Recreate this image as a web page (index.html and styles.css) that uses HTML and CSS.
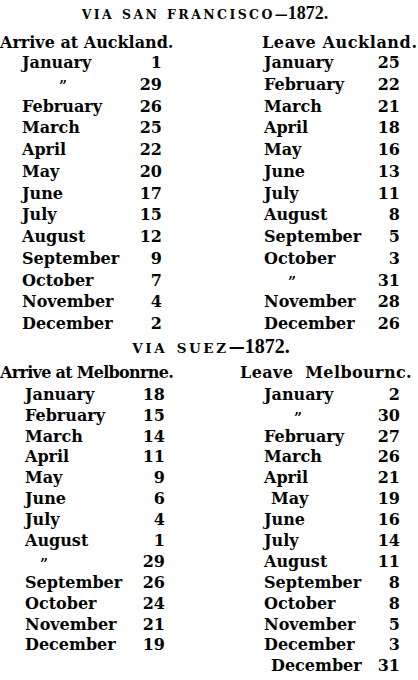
FILE: index.html
```html
<!DOCTYPE html>
<html lang="en">
<head>
<meta charset="utf-8">
<title>Mail Time Table 1872</title>
<link rel="stylesheet" href="styles.css">
</head>
<body>
<div class="page">
  <section class="sec sec-sf">
    <h1 class="title"><span class="caps">VIA SAN FRANCISCO</span><span class="dash">—</span><span class="year">1872.</span></h1>
    <div class="cols">
      <div class="col col-left">
        <h2 class="head">Arrive at Auckland.</h2>
        <ul class="rows">
          <li class="row"><span class="m">January</span><span class="d">1</span></li>
          <li class="row"><span class="m ditto ditto-a">”</span><span class="d">29</span></li>
          <li class="row"><span class="m">February</span><span class="d">26</span></li>
          <li class="row"><span class="m">March</span><span class="d">25</span></li>
          <li class="row"><span class="m">April</span><span class="d">22</span></li>
          <li class="row"><span class="m">May</span><span class="d">20</span></li>
          <li class="row"><span class="m">June</span><span class="d">17</span></li>
          <li class="row"><span class="m">July</span><span class="d">15</span></li>
          <li class="row"><span class="m">August</span><span class="d">12</span></li>
          <li class="row"><span class="m">September</span><span class="d">9</span></li>
          <li class="row"><span class="m">October</span><span class="d">7</span></li>
          <li class="row"><span class="m">November</span><span class="d">4</span></li>
          <li class="row"><span class="m">December</span><span class="d">2</span></li>
        </ul>
      </div>
      <div class="col col-right">
        <h2 class="head head-auck">Leave Auckland.</h2>
        <ul class="rows">
          <li class="row"><span class="m">January</span><span class="d">25</span></li>
          <li class="row"><span class="m">February</span><span class="d">22</span></li>
          <li class="row"><span class="m">March</span><span class="d">21</span></li>
          <li class="row"><span class="m">April</span><span class="d">18</span></li>
          <li class="row"><span class="m">May</span><span class="d">16</span></li>
          <li class="row"><span class="m">June</span><span class="d">13</span></li>
          <li class="row"><span class="m">July</span><span class="d">11</span></li>
          <li class="row"><span class="m">August</span><span class="d">8</span></li>
          <li class="row"><span class="m">September</span><span class="d">5</span></li>
          <li class="row"><span class="m">October</span><span class="d">3</span></li>
          <li class="row"><span class="m ditto ditto-b">”</span><span class="d">31</span></li>
          <li class="row"><span class="m">November</span><span class="d">28</span></li>
          <li class="row"><span class="m">December</span><span class="d">26</span></li>
        </ul>
      </div>
    </div>
  </section>
  <section class="sec sec-suez">
    <h1 class="title"><span class="caps">VIA SUEZ</span><span class="dash">—</span><span class="year">1872.</span></h1>
    <div class="cols">
      <div class="col col-left">
        <h2 class="head head-melb-arr">Arrive at Melbonrne.</h2>
        <ul class="rows rows-suez-left">
          <li class="row"><span class="m">January</span><span class="d">18</span></li>
          <li class="row"><span class="m">February</span><span class="d">15</span></li>
          <li class="row"><span class="m">March</span><span class="d">14</span></li>
          <li class="row"><span class="m">April</span><span class="d">11</span></li>
          <li class="row"><span class="m">May</span><span class="d">9</span></li>
          <li class="row"><span class="m">June</span><span class="d">6</span></li>
          <li class="row"><span class="m">July</span><span class="d">4</span></li>
          <li class="row"><span class="m">August</span><span class="d">1</span></li>
          <li class="row"><span class="m ditto ditto-c">”</span><span class="d">29</span></li>
          <li class="row"><span class="m">September</span><span class="d">26</span></li>
          <li class="row"><span class="m">October</span><span class="d">24</span></li>
          <li class="row"><span class="m">November</span><span class="d">21</span></li>
          <li class="row"><span class="m">December</span><span class="d">19</span></li>
        </ul>
      </div>
      <div class="col col-right">
        <h2 class="head head-melb">Leave Melbournc.</h2>
        <ul class="rows">
          <li class="row"><span class="m">January</span><span class="d">2</span></li>
          <li class="row"><span class="m ditto ditto-d">”</span><span class="d">30</span></li>
          <li class="row"><span class="m">February</span><span class="d">27</span></li>
          <li class="row"><span class="m">March</span><span class="d">26</span></li>
          <li class="row"><span class="m">April</span><span class="d">21</span></li>
          <li class="row"><span class="m indent">May</span><span class="d">19</span></li>
          <li class="row"><span class="m">June</span><span class="d">16</span></li>
          <li class="row"><span class="m">July</span><span class="d">14</span></li>
          <li class="row"><span class="m">August</span><span class="d">11</span></li>
          <li class="row"><span class="m">September</span><span class="d">8</span></li>
          <li class="row"><span class="m">October</span><span class="d">8</span></li>
          <li class="row"><span class="m">November</span><span class="d">5</span></li>
          <li class="row"><span class="m">December</span><span class="d">3</span></li>
          <li class="row"><span class="m indent">December</span><span class="d">31</span></li>
        </ul>
      </div>
    </div>
  </section>
</div>
</body>
</html>
```

FILE: styles.css
```css
html, body {
  margin: 0;
  padding: 0;
  background: #ffffff;
}

body {
  font-family: "DejaVu Serif", "Liberation Serif", serif;
  font-weight: bold;
  color: #050505;
  width: 418px;
  height: 680px;
  overflow: hidden;
}

.page {
  padding-top: 2px;
}

.title {
  margin: 0;
  height: 22px;
  font-size: 16px;
  line-height: 22px;
  text-align: center;
  font-weight: bold;
  white-space: nowrap;
}

.sec-sf .title {
  padding-right: 8px;
}

.sec-suez .title {
  padding-left: 4px;
}

.caps {
  font-size: 12.5px;
  letter-spacing: 2.4px;
  word-spacing: 1px;
}

.sec-suez .caps {
  font-size: 13.5px;
  letter-spacing: 2.6px;
  word-spacing: 2px;
}

.dash {
  font-size: 13px;
}

.sec-suez .dash {
  font-size: 16px;
}

.year {
  font-family: "Liberation Serif", "DejaVu Serif", serif;
  font-size: 18px;
}

.sec-suez .year {
  font-size: 20px;
}

.cols {
  display: grid;
  grid-template-columns: 240px 178px;
}

.head {
  margin: 0;
  font-size: 16px;
  line-height: 22px;
  height: 22px;
  font-weight: bold;
  white-space: nowrap;
}

.sec-sf .head {
  margin-top: 8px;
}

.sec-suez .head {
  margin-top: 5px;
}

.head-auck {
  padding-left: 22px;
  letter-spacing: 0.6px;
}

.head-melb-arr {
  letter-spacing: -0.7px;
}

.head-melb {
  letter-spacing: 0.4px;
  word-spacing: 6px;
}

.rows {
  list-style: none;
  margin: 0;
  padding: 0;
  font-size: 16px;
}

.sec-sf .rows {
  margin-top: -2px;
}

.sec-suez .rows {
  margin-top: 1px;
}

.col-left .rows {
  width: 140px;
  margin-left: 22px;
}

.col-left .rows-suez-left {
  margin-left: 25px;
}

.col-right .rows {
  width: 136px;
  margin-left: 24px;
}

.row {
  display: flex;
  justify-content: space-between;
  white-space: nowrap;
}

.sec-sf .row {
  height: 21.75px;
  line-height: 21.75px;
}

.sec-suez .row {
  height: 20.9px;
  line-height: 20.9px;
}

.ditto {
  position: relative;
  top: 2.5px;
  font-size: 14px;
}

.ditto-a { padding-left: 37px; }
.ditto-b { padding-left: 24px; }
.ditto-c { padding-left: 15px; }
.ditto-d { padding-left: 30px; }

.indent {
  padding-left: 7px;
}
```
